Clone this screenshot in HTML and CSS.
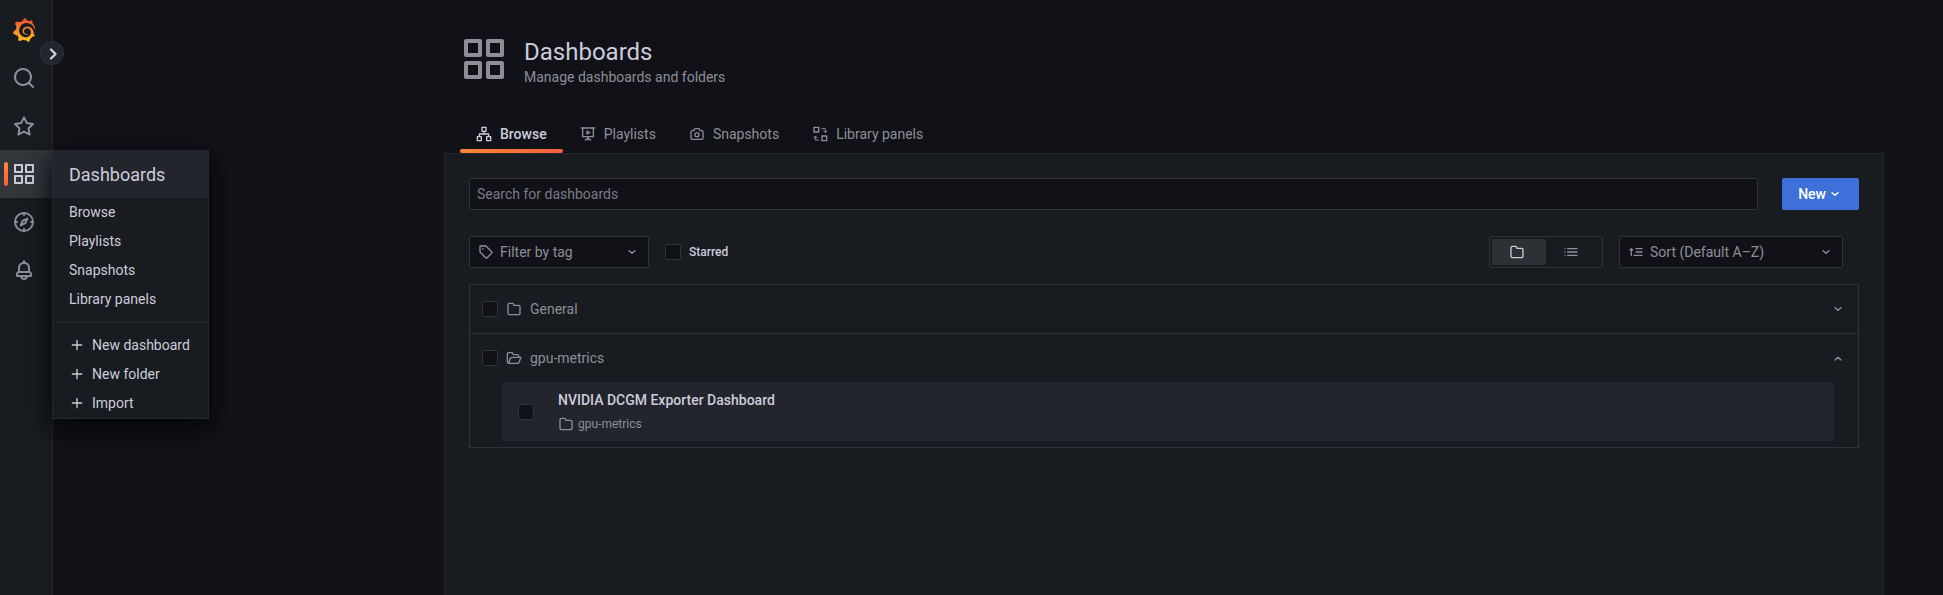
FILE: index.html
```html
<!DOCTYPE html>
<html lang="en">
<head>
<meta charset="utf-8">
<meta name="viewport" content="width=device-width, initial-scale=1">
<title>Dashboards - Grafana</title>
<link rel="stylesheet" href="styles.css">
</head>
<body>
<svg class="sprite" aria-hidden="true">
  <defs>
    <linearGradient id="flame" x1="0" y1="1" x2="0" y2="0">
      <stop offset="0" stop-color="#fcc41f"/>
      <stop offset="1" stop-color="#f1492c"/>
    </linearGradient>
    <symbol id="i-apps" viewBox="0 0 24 24"><path fill="currentColor" d="M10,13H3a1,1,0,0,0-1,1v7a1,1,0,0,0,1,1h7a1,1,0,0,0,1-1V14A1,1,0,0,0,10,13ZM9,20H4V15H9ZM21,2H14a1,1,0,0,0-1,1v7a1,1,0,0,0,1,1h7a1,1,0,0,0,1-1V3A1,1,0,0,0,21,2ZM20,9H15V4h5Zm1,4H14a1,1,0,0,0-1,1v7a1,1,0,0,0,1,1h7a1,1,0,0,0,1-1V14A1,1,0,0,0,21,13Zm-1,7H15V15h5ZM10,2H3A1,1,0,0,0,2,3v7a1,1,0,0,0,1,1h7a1,1,0,0,0,1-1V3A1,1,0,0,0,10,2ZM9,9H4V4H9Z"/></symbol>
    <symbol id="i-apps-bold" viewBox="0 0 24 24"><path fill="none" stroke="currentColor" stroke-width="2" stroke-linejoin="round" d="M3 3h7v7H3zM14 3h7v7h-7zM3 14h7v7H3zM14 14h7v7h-7z"/></symbol>
    <symbol id="i-search" viewBox="0 0 24 24"><path fill="currentColor" d="M21.71,20.29,18,16.61A9,9,0,1,0,16.61,18l3.68,3.68a1,1,0,0,0,1.42,0A1,1,0,0,0,21.71,20.29ZM11,18a7,7,0,1,1,7-7A7,7,0,0,1,11,18Z"/></symbol>
    <symbol id="i-star" viewBox="0 0 24 24"><path fill="none" stroke="currentColor" stroke-width="2" stroke-linejoin="round" d="M12 3.4l2.8 5.7 6.2.9-4.5 4.4 1.1 6.2-5.6-2.9-5.6 2.9 1.1-6.2L3 10l6.2-.9z"/></symbol>
    <symbol id="i-compass" viewBox="0 0 24 24"><g fill="none" stroke="currentColor" stroke-width="2" stroke-linecap="round" stroke-linejoin="round"><circle cx="12" cy="12" r="9"/><path d="M12 3v2M12 19v2M3 12h2M19 12h2M15.4 8.6l-4.6 2-2.2 4.8 4.8-2.2z"/></g></symbol>
    <symbol id="i-bell" viewBox="0 0 24 24"><path fill="currentColor" d="M18,13.18V10a6,6,0,0,0-5-5.910V3a1,1,0,0,0-2,0V4.090A6,6,0,0,0,6,10v3.180A3,3,0,0,0,4,16v2a1,1,0,0,0,1,1H8.140a4,4,0,0,0,7.720,0H19a1,1,0,0,0,1-1V16A3,3,0,0,0,18,13.180ZM8,10a4,4,0,0,1,8,0v3H8Zm4,10a2,2,0,0,1-1.720-1h3.440A2,2,0,0,1,12,20Zm6-3H6V16a1,1,0,0,1,1-1H17a1,1,0,0,1,1,1Z"/></symbol>
    <symbol id="i-folder" viewBox="0 0 24 24"><path fill="currentColor" d="M19,5.5H12.72l-.32-1a3,3,0,0,0-2.84-2H5a3,3,0,0,0-3,3v13a3,3,0,0,0,3,3H19a3,3,0,0,0,3-3V8.5A3,3,0,0,0,19,5.5Zm1,13a1,1,0,0,1-1,1H5a1,1,0,0,1-1-1V5.5a1,1,0,0,1,1-1H9.56a1,1,0,0,1,.95.68l.54,1.64A1,1,0,0,0,12,7.5h7a1,1,0,0,1,1,1Z"/></symbol>
    <symbol id="i-folder-open" viewBox="0 0 24 24"><path fill="none" stroke="currentColor" stroke-width="2" stroke-linejoin="round" d="M4 20a2.3 2.3 0 0 1-2-2.300V6a2 2 0 0 1 2-2h4.500a2 2 0 0 1 2 1.400L11 7h6a2 2 0 0 1 2 2v2M4 20h13.500a2 2 0 0 0 2-1.500L22.500 11H8.500a2 2 0 0 0-2 1.500z"/></symbol>
    <symbol id="i-down" viewBox="0 0 24 24"><path fill="none" stroke="currentColor" stroke-width="2" stroke-linecap="round" stroke-linejoin="round" d="M7.500 10l4.500 4 4.500-4"/></symbol>
    <symbol id="i-up" viewBox="0 0 24 24"><path fill="none" stroke="currentColor" stroke-width="2" stroke-linecap="round" stroke-linejoin="round" d="M7.500 15l4.500-4 4.500 4"/></symbol>
    <symbol id="i-right" viewBox="0 0 24 24"><path fill="none" stroke="currentColor" stroke-width="2.400" stroke-linecap="round" stroke-linejoin="round" d="M10 7.500l4.500 4.500-4.500 4.500"/></symbol>
    <symbol id="i-plus" viewBox="0 0 24 24"><path fill="none" stroke="currentColor" stroke-width="2" stroke-linecap="round" d="M12 5v14M5 12h14"/></symbol>
    <symbol id="i-sitemap" viewBox="0 0 24 24"><path fill="none" stroke="currentColor" stroke-width="2" stroke-linejoin="round" d="M9 2h6v6H9zM2 16h6v6H2zM16 16h6v6h-6zM12 8v4M5 16v-4h14v4"/></symbol>
    <symbol id="i-presentation" viewBox="0 0 24 24"><path fill="none" stroke="currentColor" stroke-width="2" stroke-linecap="round" stroke-linejoin="round" d="M2 3h20M4 3v13h16V3M12 16v5M12 18l-4 3M12 18l4 3M10.500 7.500v4.500l4-2.200z"/></symbol>
    <symbol id="i-camera" viewBox="0 0 24 24"><g fill="none" stroke="currentColor" stroke-width="2" stroke-linejoin="round"><path d="M5 7h2.300l.8-2A1.800 1.800 0 0 1 10 4h4a1.800 1.800 0 0 1 1.900 1l.8 2H19a2 2 0 0 1 2 2v9a2 2 0 0 1-2 2H5a2 2 0 0 1-2-2V9a2 2 0 0 1 2-2z"/><circle cx="12" cy="13" r="3"/></g></symbol>
    <symbol id="i-library" viewBox="0 0 24 24"><path fill="none" stroke="currentColor" stroke-width="2" d="M3 2h7v7H3zM15 15h7v7h-7z"/><path fill="none" stroke="currentColor" stroke-width="1.500" d="M14 4h6v5M17 7l3 3 3-3M11 21H5v-5M2 18l3-3 3 3"/></symbol>
    <symbol id="i-tag" viewBox="0 0 24 24"><path fill="none" stroke="currentColor" stroke-width="2" stroke-linejoin="round" d="M3 4a1 1 0 0 1 1-1h8l8.500 8.500a1.600 1.600 0 0 1 0 2.200l-6.800 6.800a1.600 1.600 0 0 1-2.200 0L3 12z"/><circle cx="7.500" cy="7.500" r="1.300" fill="currentColor"/></symbol>
    <symbol id="i-list" viewBox="0 0 24 24"><path fill="none" stroke="currentColor" stroke-width="2" stroke-linecap="round" d="M7 7h14M7 12h14M7 17h14M3 7h0M3 12h0M3 17h0"/></symbol>
    <symbol id="i-sort" viewBox="0 0 24 24"><path fill="none" stroke="currentColor" stroke-width="2" stroke-linecap="round" stroke-linejoin="round" d="M5 17V7M3 9l2-2 2 2M12 7h9M12 12h9M9 17h12"/></symbol>
  </defs>
</svg>

<div class="app">
  <nav class="sidebar" aria-label="Main menu">
    <a class="nav-link" href="#" aria-label="Home">
      <svg class="icon-lg" viewBox="0 0 24 24"><path fill="url(#flame)" d="M23.02 10.59a8.578 8.578 0 0 0-.862-3.034 8.911 8.911 0 0 0-1.789-2.445c.337-1.342-.413-2.505-.413-2.505-1.292-.08-2.113.4-2.416.62-.052-.02-.102-.044-.154-.064-.22-.089-.446-.172-.677-.247-.231-.073-.47-.14-.711-.197a9.867 9.867 0 0 0-.875-.161C14.557.753 12.94 0 12.94 0c-1.804 1.145-2.147 2.744-2.147 2.744l-.018.093c-.098.029-.2.057-.298.088-.138.042-.275.094-.413.143-.138.055-.275.107-.41.166a8.869 8.869 0 0 0-1.557.87l-.063-.029c-2.497-.955-4.716.195-4.716.195-.203 2.658.996 4.33 1.235 4.636a11.608 11.608 0 0 0-.607 2.635C1.636 12.684.953 15.014.953 15.014c1.926 2.214 4.171 2.351 4.171 2.351.003-.002.006-.002.006-.005.285.509.615.994.986 1.446.156.19.32.371.488.548-.704 2.009.099 3.68.099 3.68 2.144.08 3.553-.937 3.849-1.173a9.784 9.784 0 0 0 3.164.501h.08l.055-.003.107-.002.103-.005.003.002c1.01 1.44 2.788 1.646 2.788 1.646 1.264-1.332 1.337-2.653 1.337-2.94v-.058c0-.02-.003-.039-.003-.06.265-.187.52-.387.758-.6a7.875 7.875 0 0 0 1.415-1.7c1.43.083 2.437-.885 2.437-.885-.236-1.49-1.085-2.216-1.264-2.354l-.018-.013-.016-.013a.217.217 0 0 1-.031-.02c.008-.092.016-.18.02-.27.011-.162.016-.323.016-.48v-.253l-.005-.098-.008-.135a1.891 1.891 0 0 0-.01-.13c-.003-.042-.008-.083-.013-.125l-.016-.124-.018-.122a6.215 6.215 0 0 0-2.032-3.73 6.015 6.015 0 0 0-3.222-1.46 6.292 6.292 0 0 0-.85-.048l-.107.002h-.063l-.044.003-.104.008a4.777 4.777 0 0 0-3.335 1.695c-.332.4-.592.84-.768 1.297a4.594 4.594 0 0 0-.312 1.817l.003.091c.005.055.007.11.013.164a3.615 3.615 0 0 0 .698 1.82 3.53 3.53 0 0 0 1.827 1.282c.33.098.66.14.971.137.039 0 .078 0 .114-.002l.063-.003c.02 0 .041-.003.062-.003.034-.002.065-.007.099-.01.007 0 .018-.003.028-.003l.031-.005.06-.008a1.18 1.18 0 0 0 .112-.02c.036-.008.072-.013.109-.024a2.634 2.634 0 0 0 .914-.415c.028-.02.056-.041.085-.065a.248.248 0 0 0 .039-.35.244.244 0 0 0-.309-.06l-.078.042c-.09.044-.184.083-.283.116a2.476 2.476 0 0 1-.475.096c-.028.003-.054.006-.083.006l-.083.002c-.026 0-.054 0-.08-.002l-.102-.006h-.012l-.024.006c-.016-.003-.031-.003-.044-.006-.031-.002-.06-.007-.091-.01a2.59 2.59 0 0 1-.724-.213 2.557 2.557 0 0 1-.667-.438 2.52 2.52 0 0 1-.805-1.475 2.306 2.306 0 0 1-.029-.444l.006-.122v-.023l.002-.031c.003-.021.003-.04.005-.06a3.163 3.163 0 0 1 1.352-2.29 3.12 3.12 0 0 1 .937-.43 2.946 2.946 0 0 1 .776-.101h.06l.07.002.045.003h.026l.07.005a4.041 4.041 0 0 1 1.635.49 3.94 3.94 0 0 1 1.602 1.662 3.77 3.77 0 0 1 .397 1.414l.005.076.003.075c.002.026.002.05.002.075 0 .024.003.052 0 .07v.065l-.002.073-.008.174a6.195 6.195 0 0 1-.08.639 5.1 5.1 0 0 1-.267.927 5.31 5.31 0 0 1-.624 1.13 5.052 5.052 0 0 1-3.237 2.014 4.82 4.82 0 0 1-.649.066l-.039.003h-.287a6.607 6.607 0 0 1-1.716-.265 6.776 6.776 0 0 1-3.4-2.274 6.75 6.75 0 0 1-.746-1.15 6.616 6.616 0 0 1-.714-2.596l-.005-.083-.002-.02v-.056l-.003-.073v-.096l-.003-.104v-.07l.003-.163c.008-.22.026-.45.054-.678a8.707 8.707 0 0 1 .28-1.355c.128-.444.286-.872.473-1.277a7.04 7.04 0 0 1 1.456-2.1 5.925 5.925 0 0 1 .953-.763c.169-.111.343-.213.524-.306.089-.05.182-.091.273-.135.047-.02.093-.042.138-.062a7.177 7.177 0 0 1 .714-.267l.145-.045c.049-.015.098-.026.148-.041.098-.029.197-.052.296-.076.049-.013.1-.02.15-.033l.15-.032.151-.028.076-.013.075-.01.153-.024c.057-.01.114-.013.171-.023l.169-.021c.036-.003.073-.008.106-.01l.073-.008.036-.003.042-.002c.057-.003.114-.008.171-.01l.086-.006h.023l.037-.003.145-.007a7.999 7.999 0 0 1 1.708.125 7.917 7.917 0 0 1 2.048.68 8.253 8.253 0 0 1 1.672 1.09l.09.077.089.078c.06.052.114.107.171.159.057.052.112.106.166.16.052.055.107.107.159.164a8.671 8.671 0 0 1 1.41 1.978c.012.026.028.052.04.078l.04.078.075.156c.023.051.05.1.07.153l.065.15a8.848 8.848 0 0 1 .45 1.34.19.19 0 0 0 .201.142.186.186 0 0 0 .172-.184c.01-.246.002-.532-.024-.856z"/></svg>
    </a>
    <a class="nav-link" href="#" aria-label="Search"><svg class="icon-lg"><use href="#i-search"/></svg></a>
    <a class="nav-link" href="#" aria-label="Starred"><svg class="icon-lg"><use href="#i-star"/></svg></a>
    <div class="nav-group">
      <a class="nav-link nav-link-active" href="#" aria-label="Dashboards"><svg class="icon-lg"><use href="#i-apps"/></svg></a>
      <div class="flyout">
        <a class="flyout-title" href="#">Dashboards</a>
        <ul class="flyout-list">
          <li><a class="flyout-item" href="#">Browse</a></li>
          <li><a class="flyout-item" href="#">Playlists</a></li>
          <li><a class="flyout-item" href="#">Snapshots</a></li>
          <li><a class="flyout-item" href="#">Library panels</a></li>
        </ul>
        <ul class="flyout-list flyout-actions">
          <li><a class="flyout-item" href="#"><svg class="icon"><use href="#i-plus"/></svg>New dashboard</a></li>
          <li><a class="flyout-item" href="#"><svg class="icon"><use href="#i-plus"/></svg>New folder</a></li>
          <li><a class="flyout-item" href="#"><svg class="icon"><use href="#i-plus"/></svg>Import</a></li>
        </ul>
      </div>
    </div>
    <a class="nav-link" href="#" aria-label="Explore"><svg class="icon-lg"><use href="#i-compass"/></svg></a>
    <a class="nav-link" href="#" aria-label="Alerting"><svg class="icon-lg"><use href="#i-bell"/></svg></a>
    <button class="expand" type="button" aria-label="Open navigation menu"><svg class="icon-lg"><use href="#i-right"/></svg></button>
  </nav>

  <main class="main">
    <div class="page">
      <header class="page-header">
        <svg class="icon-xl"><use href="#i-apps-bold"/></svg>
        <div class="page-heading">
          <h1 class="page-title">Dashboards</h1>
          <p class="page-subtitle">Manage dashboards and folders</p>
        </div>
      </header>

      <nav class="tabs" aria-label="Dashboards sections">
        <a class="tab tab-active" href="#"><svg class="icon"><use href="#i-sitemap"/></svg>Browse</a>
        <a class="tab" href="#"><svg class="icon"><use href="#i-presentation"/></svg>Playlists</a>
        <a class="tab" href="#"><svg class="icon"><use href="#i-camera"/></svg>Snapshots</a>
        <a class="tab" href="#"><svg class="icon"><use href="#i-library"/></svg>Library panels</a>
      </nav>

      <div class="panel">
        <div class="search-row">
          <input class="search" type="text" placeholder="Search for dashboards" aria-label="Search for dashboards">
          <button class="new-button" type="button">New<svg class="icon"><use href="#i-down"/></svg></button>
        </div>

        <div class="filter-row">
          <div class="select select-tag">
            <svg class="icon"><use href="#i-tag"/></svg>
            <select class="select-input" aria-label="Filter by tag"><option>Filter by tag</option></select>
            <svg class="icon"><use href="#i-down"/></svg>
          </div>
          <label class="starred"><input class="checkbox" type="checkbox">Starred</label>
          <div class="layout-toggle" role="radiogroup" aria-label="Layout">
            <label class="toggle-option"><input class="toggle-input" type="radio" name="layout" aria-label="View by folders" checked><svg class="icon"><use href="#i-folder"/></svg></label>
            <label class="toggle-option"><input class="toggle-input" type="radio" name="layout" aria-label="View as list"><svg class="icon"><use href="#i-list"/></svg></label>
          </div>
          <div class="select select-sort">
            <svg class="icon"><use href="#i-sort"/></svg>
            <select class="select-input" aria-label="Sort"><option>Sort (Default A–Z)</option></select>
            <svg class="icon"><use href="#i-down"/></svg>
          </div>
        </div>

        <div class="folders">
          <section class="folder">
            <div class="folder-header">
              <input class="checkbox" type="checkbox" aria-label="Select folder General">
              <svg class="icon"><use href="#i-folder"/></svg>
              <span class="folder-name">General</span>
              <button class="collapse" type="button" aria-label="Expand folder General"><svg class="icon"><use href="#i-down"/></svg></button>
            </div>
          </section>
          <section class="folder">
            <div class="folder-header">
              <input class="checkbox" type="checkbox" aria-label="Select folder gpu-metrics">
              <svg class="icon"><use href="#i-folder-open"/></svg>
              <span class="folder-name">gpu-metrics</span>
              <button class="collapse" type="button" aria-label="Collapse folder gpu-metrics"><svg class="icon"><use href="#i-up"/></svg></button>
            </div>
            <div class="item">
              <input class="checkbox" type="checkbox" aria-label="Select NVIDIA DCGM Exporter Dashboard">
              <div>
                <a class="item-title" href="#">NVIDIA DCGM Exporter Dashboard</a>
                <div class="item-folder"><svg class="icon"><use href="#i-folder"/></svg>gpu-metrics</div>
              </div>
            </div>
          </section>
        </div>
      </div>
    </div>
  </main>
</div>
</body>
</html>
```

FILE: styles.css
```css
:root {
  --canvas: #111217;
  --surface: #181b1f;
  --raised: #22252b;
  --line: #25272c;
  --line-strong: #303237;
  --text: #ccccdc;
  --muted: #8e8e99;
}

* {
  box-sizing: border-box;
}

body {
  margin: 0;
  background: var(--canvas);
  color: var(--text);
  font: 400 14px/22px Roboto, "Liberation Sans", sans-serif;
}

a {
  color: inherit;
  text-decoration: none;
}

button,
input,
select {
  font: inherit;
  color: inherit;
}

.sprite {
  position: absolute;
  width: 0;
  height: 0;
}

.icon,
.icon-lg,
.icon-xl {
  display: block;
  flex: none;
  width: 16px;
  height: 16px;
}

.icon-lg {
  width: 24px;
  height: 24px;
}

.icon-xl {
  width: 48px;
  height: 48px;
}

.app {
  display: flex;
  min-height: 100vh;
}

/* Sidebar */
.sidebar {
  position: relative;
  z-index: 1;
  flex: none;
  width: 53px;
  padding-top: 6px;
  background: var(--surface);
  border-right: 1px solid var(--line);
  color: var(--muted);
}

.nav-group {
  position: relative;
}

.nav-link {
  display: flex;
  align-items: center;
  height: 48px;
  padding-left: 12px;
}

.nav-link-active {
  position: relative;
  background: #32353a;
  color: var(--text);
}

.nav-link-active::before {
  content: "";
  position: absolute;
  top: 12px;
  bottom: 12px;
  left: 4px;
  width: 4px;
  border-radius: 2px;
  background: linear-gradient(#ff8833, #f55f3e);
}

.expand {
  position: absolute;
  top: 41px;
  right: -12px;
  display: grid;
  place-items: center;
  width: 24px;
  height: 24px;
  padding: 0;
  border: 1px solid var(--line-strong);
  border-radius: 50%;
  background: var(--raised);
  color: var(--text);
}

.flyout {
  position: absolute;
  top: 0;
  left: 100%;
  width: 157px;
  border: 1px solid var(--line);
  border-top: 0;
  background: var(--surface);
  box-shadow: 0 8px 24px #010409;
  color: var(--text);
  white-space: nowrap;
}

.flyout-title {
  display: block;
  height: 48px;
  padding: 0 16px;
  background: var(--raised);
  font-size: 18px;
  line-height: 50px;
}

.flyout-list {
  margin: 0;
  padding: 0;
  list-style: none;
}

.flyout-actions {
  margin-top: 8px;
  padding-top: 8px;
  border-top: 1px solid var(--line);
}

.flyout-item {
  display: flex;
  align-items: center;
  gap: 7px;
  height: 29px;
  padding: 0 16px 2px;
}

/* Page */
.main {
  flex: 1;
  display: flex;
  min-width: 0;
  padding: 32px 59px 0 24px;
}

.page {
  flex: 1;
  display: flex;
  flex-direction: column;
  max-width: 1440px;
  margin-left: auto;
}

.page-header {
  display: flex;
  gap: 16px;
  padding: 3px 16px 0;
  color: var(--muted);
}

.page-heading {
  padding-top: 2px;
}

.page-title {
  margin: 0;
  color: var(--text);
  font-size: 24px;
  font-weight: 400;
  line-height: 30px;
}

.page-subtitle {
  margin: 0;
  line-height: 20px;
}

.tabs {
  display: flex;
  gap: 1px;
  margin-top: 28px;
  padding: 0 16px;
}

.tab {
  position: relative;
  display: flex;
  align-items: center;
  gap: 8px;
  height: 38px;
  padding: 0 16px;
  color: var(--muted);
}

.tab-active {
  color: var(--text);
  font-weight: 500;
}

.tab-active::after {
  content: "";
  position: absolute;
  right: 0;
  bottom: 0;
  left: 0;
  height: 4px;
  border-radius: 2px;
  background: linear-gradient(90deg, #ff8833, #f55f3e);
}

.panel {
  flex: 1;
  padding: 24px;
  border: 1px solid var(--line);
  border-bottom: 0;
  background: var(--surface);
}

/* Controls */
.search-row {
  display: flex;
  gap: 24px;
}

.search {
  flex: 1;
  min-width: 0;
  height: 32px;
  padding: 0 7px;
  border: 1px solid var(--line-strong);
  border-radius: 2px;
  background: var(--canvas);
}

.search::placeholder {
  color: #7b7b86;
  opacity: 1;
}

.new-button {
  display: flex;
  align-items: center;
  justify-content: center;
  gap: 1px;
  height: 32px;
  padding: 0 16px;
  border: 0;
  border-radius: 2px;
  background: #3d71d9;
  color: #fff;
  font-weight: 500;
}

.filter-row {
  display: flex;
  align-items: center;
  gap: 16px;
  margin-top: 26px;
  padding-right: 16px;
}

.select {
  display: flex;
  align-items: center;
  gap: 6px;
  height: 32px;
  padding: 0 8px;
  border: 1px solid var(--line-strong);
  border-radius: 2px;
  background: var(--canvas);
  color: var(--muted);
}

.select-tag {
  width: 180px;
}

.select-sort {
  width: 224px;
}

.select-input {
  flex: 1;
  min-width: 0;
  padding: 0;
  border: 0;
  background: transparent;
  appearance: none;
}

.checkbox {
  flex: none;
  width: 16px;
  height: 16px;
  margin: 0;
  border: 1px solid var(--line-strong);
  border-radius: 2px;
  background: var(--canvas);
  appearance: none;
}

.starred {
  display: flex;
  align-items: center;
  gap: 8px;
  margin-right: auto;
  font-size: 12px;
  font-weight: 500;
}

.layout-toggle {
  display: flex;
  height: 32px;
  padding: 2px;
  border: 1px solid var(--line-strong);
  border-radius: 2px;
}

.toggle-option {
  display: grid;
  place-items: center;
  width: 54px;
  padding-right: 5px;
  border-radius: 2px;
  color: var(--muted);
}

.toggle-option:has(:checked) {
  background: #2d3035;
  color: var(--text);
}

.toggle-input {
  position: absolute;
  margin: 0;
  opacity: 0;
}

/* Folder list */
.folders {
  margin-top: 16px;
  border: 1px solid var(--line-strong);
}

.folder + .folder {
  padding-bottom: 6px;
  border-top: 1px solid var(--line-strong);
}

.folder-header {
  display: flex;
  align-items: center;
  gap: 8px;
  height: 48px;
  padding: 0 12px;
  color: var(--muted);
}

.collapse {
  margin-left: auto;
  padding: 0;
  border: 0;
  background: none;
}

.item {
  display: flex;
  align-items: center;
  gap: 24px;
  margin: 0 24px 0 32px;
  padding: 8px 16px 7px;
  border-radius: 2px;
  background: var(--raised);
}

.item-title {
  display: block;
  font-weight: 500;
  line-height: 20px;
}

.item-folder {
  display: flex;
  align-items: center;
  gap: 4px;
  margin-top: 4px;
  color: var(--muted);
  font-size: 12px;
  line-height: 20px;
}
```
